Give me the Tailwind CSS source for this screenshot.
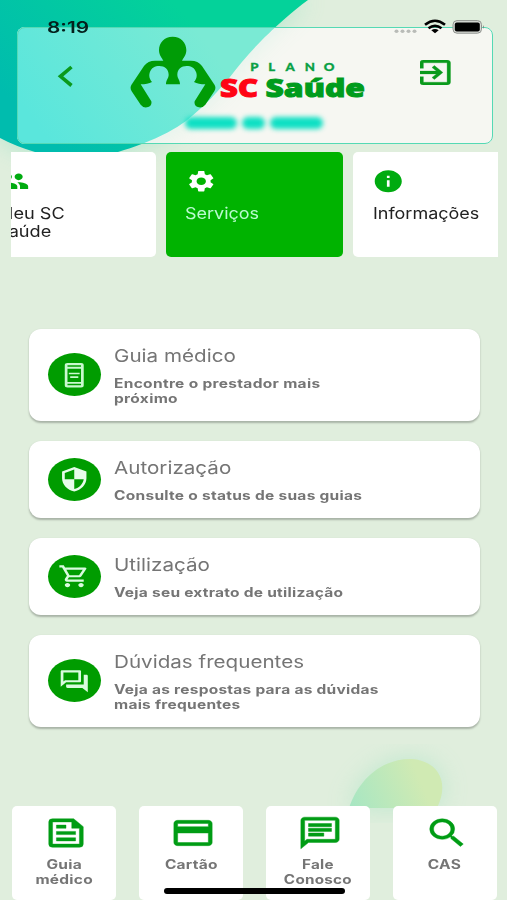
<!DOCTYPE html>
<html lang="pt-BR">
<head>
<meta charset="utf-8">
<meta name="viewport" content="width=device-width, initial-scale=1">
<title>SC Saúde</title>
<script src="https://cdn.jsdelivr.net/npm/@tailwindcss/browser@4"></script>
</head>
<body class="bg-[#e0eedd] font-['Inter','Liberation_Sans',sans-serif]">
<div class="relative isolate flex h-[900px] w-[507px] flex-col overflow-hidden">

  <!-- decorative background -->
  <svg class="absolute inset-0 -z-10" width="507" height="900" viewBox="0 0 507 900">
    <defs>
      <linearGradient id="sea" gradientUnits="userSpaceOnUse" x1="40" y1="130" x2="170" y2="0">
        <stop offset="0" stop-color="#00bcae"/><stop offset="1" stop-color="#04d29a"/>
      </linearGradient>
      <linearGradient id="seaLight" gradientUnits="userSpaceOnUse" x1="40" y1="130" x2="190" y2="20">
        <stop offset="0" stop-color="#5ae6dc"/><stop offset="1" stop-color="#7aead4"/>
      </linearGradient>
      <linearGradient id="leaf" gradientUnits="userSpaceOnUse" x1="350" y1="810" x2="420" y2="780">
        <stop offset="0" stop-color="#a6e6c3"/><stop offset="1" stop-color="#d0eab3"/>
      </linearGradient>
      <filter id="soft" x="-30%" y="-30%" width="160%" height="160%"><feGaussianBlur stdDeviation="13"/></filter>
      <clipPath id="panel"><rect x="17" y="27" width="476" height="117" rx="8"/></clipPath>
      <path id="wave" d="M0 0H308C293 11 275 27 262 40C250 52 240 64 230 77C220 89 205 106 186 121C172 131 152 142 118 152C95 158 60 160 35 152Q15 146 0 138Z"/>
    </defs>
    <use href="#wave" fill="#5fdcb4" opacity=".4" filter="url(#soft)"/>
    <use href="#wave" fill="url(#sea)"/>
    <g clip-path="url(#panel)">
      <rect x="17" y="27" width="476" height="117" fill="#f6f7f2"/>
      <use href="#wave" fill="#8fe8cc" opacity=".22" filter="url(#soft)"/>
      <use href="#wave" fill="url(#seaLight)"/>
    </g>
    <path d="M349 808C358 780 382 758 412 759C438 761 450 782 437 808Z" fill="#7fdcb0" opacity=".35" filter="url(#soft)"/>
    <path d="M349 808C358 780 382 758 412 759C438 761 450 782 437 808Z" fill="url(#leaf)"/>
  </svg>

  <!-- status bar -->
  <div class="absolute inset-x-0 top-[18px] z-10 flex h-[18px] items-center pl-[47px] pr-[22px]">
    <span class="origin-left scale-x-[1.300] text-[16px] font-semibold leading-[18px] text-[#04201c]">8:19</span>
    <svg class="ml-auto" width="92" height="18" viewBox="0 0 92 18">
      <g fill="#b9bcb8"><ellipse cx="3.500" cy="13.300" rx="2" ry="1.700"/><ellipse cx="9.500" cy="13.300" rx="2" ry="1.700"/><ellipse cx="15.500" cy="13.300" rx="2" ry="1.700"/><ellipse cx="21.500" cy="13.300" rx="2" ry="1.700"/></g>
      <g fill="none" stroke="#000" stroke-width="2.600"><path d="M32 6.800Q42 -1.300 52 6.800"/><path d="M35.500 10.300Q42 5.300 48.500 10.300"/></g>
      <path d="M38.300 12.200Q42 9.600 45.700 12.200L42 15.200Z"/>
      <rect x="60" y="2.600" width="28.500" height="12.600" rx="4" fill="#d9dcd7" stroke="#8f928e"/>
      <rect x="61.800" y="4.600" width="25" height="8.800" rx="2"/>
      <path d="M90 7Q91.800 9 90 11Z" fill="#6f726e"/>
    </svg>
  </div>

  <!-- header -->
  <header class="ml-[17px] mt-[27px] flex h-[117px] w-[476px] shrink-0 rounded-[8px] border border-[#55d9b4]">
    <svg class="ml-[38px] mt-[36px] shrink-0" width="20" height="24" viewBox="0 0 20 24"><path d="M15.500 3L4.500 12.300L15.500 21.500" fill="none" stroke="#0a9a1c" stroke-width="3.600"/></svg>
    <div class="ml-[54px] mt-[8px] w-[240px] shrink-0">
      <svg width="240" height="74" viewBox="130 36 240 74">
        <g transform="translate(120 30) scale(.3333)" fill="#009c06">
          <path d="M158 20C183 20 199 38 199 60C199 76 190 84 186 92H213Q234 92 246 108L284 165Q289 174 283 184L256 224Q248 234 237 232Q221 228 224 214L256 163Q235 163 222 156C229 147 232 140 229 128C224 113 213 108 200 108C184 108 172 118 172 134C172 145 180 149 180 163H138C138 149 146 145 146 134C146 118 134 108 118 108C105 108 94 113 89 128C86 140 89 147 96 156Q83 163 62 163L94 214Q97 228 81 232Q70 234 62 224L35 184Q29 174 34 165L72 108Q84 92 105 92H130C126 84 117 76 117 60C117 38 133 20 158 20Z"/>
        </g>
        <text transform="scale(1.2 1)" x="208.500 223.500 238 254 269.800" y="71" font-family="Lato" font-weight="900" font-size="11" fill="#0aa045" stroke="#0aa045" stroke-width=".3">PLANO</text>
        <text x="220" y="97" font-family="Open Sans" font-weight="800" font-size="25" textLength="38" lengthAdjust="spacingAndGlyphs" fill="#ff0414" stroke="#ff0414">SC</text>
        <text x="265.500" y="97" font-family="Open Sans" font-weight="800" font-size="25" textLength="99.500" lengthAdjust="spacingAndGlyphs" fill="#009c1c" stroke="#009c1c">Saúde</text>
      </svg>
      <div class="ml-[55px] mt-[7px] flex gap-[5px] blur-[2.500px]">
        <span class="h-[12px] w-[52px] rounded-full bg-[#0ee0c4]"></span>
        <span class="h-[12px] w-[23px] rounded-full bg-[#0ee0c4]"></span>
        <span class="h-[12px] w-[53px] rounded-full bg-[#0ee0c4]"></span>
      </div>
    </div>
    <svg class="ml-[50px] mt-[32px] shrink-0" width="30.500" height="25" viewBox="3 3 18 18" preserveAspectRatio="none"><path fill="#0a9a1c" stroke="#0a9a1c" stroke-width=".2" d="M10.090 15.590L11.500 17l5-5-5-5-1.410 1.410L12.670 11H3v2h9.670l-2.580 2.590zM19 3H5a2 2 0 0 0-2 2v4h2V5h14v14H5v-4H3v4a2 2 0 0 0 2 2h14c1.100 0 2-.9 2-2V5c0-1.100-.9-2-2-2z"/></svg>
  </header>

  <!-- tabs -->
  <nav class="ml-[10.500px] mt-[8px] flex h-[105px] w-[487.500px] shrink-0 gap-[10px] overflow-hidden text-[15.500px] leading-[18px] text-[#212121]">
    <div class="-ml-[32px] w-[177px] shrink-0 rounded-[5px] bg-white pl-[18.500px] pt-[16px]">
      <svg width="32.500" height="26.500" viewBox="0 0 24 24" preserveAspectRatio="none"><path fill="#00ab10" d="M16 11c1.660 0 2.990-1.340 2.990-3S17.660 5 16 5c-1.660 0-3 1.340-3 3s1.340 3 3 3zm-8 0c1.660 0 2.990-1.340 2.990-3S9.660 5 8 5C6.340 5 5 6.340 5 8s1.340 3 3 3zm0 2c-2.330 0-7 1.170-7 3.500V19h14v-2.500c0-2.330-4.670-3.500-7-3.500zm8 0c-.29 0-.62.02-.97.05 1.160.84 1.970 1.970 1.970 3.450V19h6v-2.500c0-2.330-4.670-3.500-7-3.500z"/></svg>
      <p class="mt-[10px] origin-left scale-x-[1.170] whitespace-nowrap">Meu SC<br>Saúde</p>
    </div>
    <div class="w-[177px] shrink-0 rounded-[5px] bg-[#00b300] pl-[19.500px] pt-[16px] text-[#b9fbd0]">
      <svg class="ml-[-0.500px]" width="32.500" height="26.500" viewBox="0 0 24 24" preserveAspectRatio="none"><path transform="translate(12 12) scale(.96) translate(-12 -12)" fill="#fff" d="M19.140 12.940c.04-.3.06-.61.06-.94 0-.32-.02-.64-.07-.94l2.030-1.580c.18-.14.23-.41.12-.61l-1.920-3.320c-.12-.22-.37-.29-.59-.22l-2.390.96c-.5-.38-1.030-.7-1.620-.94l-.36-2.540c-.04-.24-.24-.41-.48-.41h-3.840c-.24 0-.43.17-.47.41l-.36 2.540c-.59.24-1.130.57-1.620.94l-2.390-.96c-.22-.08-.47 0-.59.22L2.740 8.870c-.12.21-.08.47.12.61l2.030 1.580c-.05.3-.09.63-.09.94s.02.64.07.94l-2.030 1.580c-.18.14-.23.41-.12.61l1.920 3.320c.12.22.37.29.59.22l2.390-.96c.5.38 1.030.7 1.620.94l.36 2.540c.05.24.24.41.48.41h3.840c.24 0 .44-.17.47-.41l.36-2.540c.59-.24 1.130-.56 1.620-.94l2.390.96c.22.08.47 0 .59-.22l1.920-3.320c.12-.22.07-.47-.12-.61l-2.010-1.580zM12 15.600c-1.980 0-3.600-1.620-3.600-3.600s1.620-3.600 3.600-3.600 3.600 1.620 3.600 3.600-1.620 3.600-3.600 3.600z"/></svg>
      <p class="mt-[10px] origin-left scale-x-[1.160] whitespace-nowrap">Serviços</p>
    </div>
    <div class="w-[177px] shrink-0 rounded-[5px] bg-white pl-[20px] pt-[16px]">
      <svg class="ml-[-0.500px]" width="32.500" height="26.500" viewBox="0 0 24 24" preserveAspectRatio="none"><path fill="#00ab10" d="M12 2C6.480 2 2 6.480 2 12s4.480 10 10 10 10-4.480 10-10S17.520 2 12 2zm1 15h-2v-6h2v6zm0-8h-2V7h2v2z"/></svg>
      <p class="mt-[10px] origin-left scale-x-[1.160] whitespace-nowrap">Informações</p>
    </div>
  </nav>

  <!-- services -->
  <main class="ml-[29px] mt-[71.500px] flex w-[451px] shrink-0 flex-col gap-[19.500px] text-[#757575]">
    <section class="flex h-[92.500px] items-center rounded-[12px] bg-white pl-[19px] shadow-[0_1.500px_2px_#00000040]">
      <span class="flex h-[43px] w-[53px] shrink-0 items-center justify-center rounded-[50%] bg-[#009c00]">
        <svg width="32.500" height="26.500" viewBox="0 0 24 24" preserveAspectRatio="none"><path fill="#c9f9cf" fill-rule="evenodd" d="M7 1h10a2 2 0 0 1 2 2v18a2 2 0 0 1-2 2H7a2 2 0 0 1-2-2V3a2 2 0 0 1 2-2zM7 3v1.200h10V3zM7 6v12h10V6zM7 19.800V21h10v-1.200zM8 9.700h8v1.500H8zM9 12.900h6v1.500H9z"/></svg>
      </span>
      <div class="ml-[13px] mt-[1px] origin-left scale-x-[1.240] whitespace-nowrap">
        <h2 class="origin-left scale-x-[.95] text-[17.500px] leading-[22px]">Guia médico</h2>
        <p class="mt-[9px] text-[12.500px] font-bold leading-[15px] tracking-[0.250px]">Encontre o prestador mais<br>próximo</p>
      </div>
    </section>
    <section class="flex h-[77.500px] items-center rounded-[12px] bg-white pl-[19px] shadow-[0_1.500px_2px_#00000040]">
      <span class="flex h-[43px] w-[53px] shrink-0 items-center justify-center rounded-[50%] bg-[#009c00]">
        <svg width="32.500" height="26.500" viewBox="0 0 24 24" preserveAspectRatio="none"><path fill="#e6fde9" d="M12 1L3 5v6c0 5.550 3.840 10.740 9 12 5.160-1.260 9-6.450 9-12V5l-9-4zm0 10.990h7c-.53 4.120-3.280 7.790-7 8.940V12H5V6.300l7-3.110v8.800z"/></svg>
      </span>
      <div class="ml-[13px] mt-[1px] origin-left scale-x-[1.240] whitespace-nowrap">
        <h2 class="origin-left scale-x-[.95] text-[17.500px] leading-[22px]">Autorização</h2>
        <p class="mt-[9px] text-[12.500px] font-bold leading-[15px] tracking-[0.220px]">Consulte o status de suas guias</p>
      </div>
    </section>
    <section class="flex h-[77.500px] items-center rounded-[12px] bg-white pl-[19px] shadow-[0_1.500px_2px_#00000040]">
      <span class="flex h-[43px] w-[53px] shrink-0 items-center justify-center rounded-[50%] bg-[#009c00]">
        <svg width="32.500" height="26.500" viewBox="0 0 24 24" preserveAspectRatio="none"><path fill="#d9fbde" d="M15.550 13c.75 0 1.410-.41 1.750-1.030l3.580-6.490c.37-.66-.11-1.480-.87-1.480H5.210l-.94-2H1v2h2l3.600 7.590-1.350 2.440C4.520 15.370 5.480 17 7 17h12v-2H7l1.100-2h7.450zM6.160 6h12.150l-2.760 5H8.530L6.160 6zM7 18c-1.100 0-1.990.9-1.990 2S5.900 22 7 22s2-.9 2-2-.9-2-2-2zm10 0c-1.100 0-1.990.9-1.990 2s.89 2 1.990 2 2-.9 2-2-.9-2-2-2z"/></svg>
      </span>
      <div class="ml-[13px] mt-[1px] origin-left scale-x-[1.240] whitespace-nowrap">
        <h2 class="origin-left scale-x-[.95] text-[17.500px] leading-[22px]">Utilização</h2>
        <p class="mt-[9px] text-[12.500px] font-bold leading-[15px] tracking-[0.200px]">Veja seu extrato de utilização</p>
      </div>
    </section>
    <section class="flex h-[92.500px] items-center rounded-[12px] bg-white pl-[19px] shadow-[0_1.500px_2px_#00000040]">
      <span class="flex h-[43px] w-[53px] shrink-0 items-center justify-center rounded-[50%] bg-[#009c00]">
        <svg width="32.500" height="26.500" viewBox="0 0 24 24" preserveAspectRatio="none"><path fill="#d9fbde" d="M15 4v7H5.170L4 12.170V4h11m1-2H3c-.55 0-1 .45-1 1v14l4-4h10c.55 0 1-.45 1-1V3c0-.55-.45-1-1-1zm5 4h-2v9H6v2c0 .55.45 1 1 1h11l4 4V7c0-.55-.45-1-1-1z"/></svg>
      </span>
      <div class="ml-[13px] mt-[1px] origin-left scale-x-[1.240] whitespace-nowrap">
        <h2 class="origin-left scale-x-[.95] text-[17.500px] leading-[22px]">Dúvidas frequentes</h2>
        <p class="mt-[9px] text-[12.500px] font-bold leading-[15px] tracking-[0.200px]">Veja as respostas para as dúvidas<br>mais frequentes</p>
      </div>
    </section>
  </main>

  <!-- bottom shortcuts -->
  <footer class="ml-[12px] mt-auto grid h-[94px] w-[485px] shrink-0 grid-cols-4 gap-[22.500px] text-center text-[12.500px] font-bold leading-[15px] tracking-[0.200px] text-[#757575]">
    <div class="flex flex-col items-center rounded-[5px] bg-white pt-[8px]">
      <svg class="ml-[4px]" width="46" height="38" viewBox="0 0 24 24" preserveAspectRatio="none"><path fill="#009c14" stroke="#009c14" stroke-width=".25" d="M16 3H5a2 2 0 0 0-2 2v14a2 2 0 0 0 2 2h14a2 2 0 0 0 2-2V8l-5-5zm3 16H5V5h10v4h4v10zM7 17h10v-2H7v2zm5-10H7v2h5V7zm-5 6h10v-2H7v2z"/></svg>
      <p class="mt-[5px] scale-x-[1.240]">Guia<br>médico</p>
    </div>
    <div class="flex flex-col items-center rounded-[5px] bg-white pt-[8px]">
      <svg class="ml-[4px]" width="46" height="38" viewBox="0 0 24 24" preserveAspectRatio="none"><path fill="#009c14" stroke="#009c14" stroke-width=".25" d="M20 4H4c-1.110 0-1.990.89-1.990 2L2 18c0 1.110.89 2 2 2h16c1.110 0 2-.89 2-2V6c0-1.110-.89-2-2-2zm0 14H4v-6h16v6zm0-10H4V6h16v2z"/></svg>
      <p class="mt-[5px] scale-x-[1.240]">Cartão</p>
    </div>
    <div class="flex flex-col items-center rounded-[5px] bg-white pt-[8px]">
      <svg class="ml-[4px]" width="46" height="38" viewBox="0 0 24 24" preserveAspectRatio="none"><path fill="#009c14" stroke="#009c14" stroke-width=".25" d="M4 4h16v12H5.170L4 17.170V4m0-2c-1.100 0-1.990.9-1.990 2L2 22l4-4h14c1.100 0 2-.9 2-2V4c0-1.100-.9-2-2-2H4zm2 10h8v2H6v-2zm0-3h12v2H6V9zm0-3h12v2H6V6z"/></svg>
      <p class="mt-[5px] scale-x-[1.220]">Fale<br>Conosco</p>
    </div>
    <div class="flex flex-col items-center rounded-[5px] bg-white pt-[8px]">
      <svg class="ml-[4px]" width="46" height="38" viewBox="0 0 24 24" preserveAspectRatio="none"><path fill="#009c14" stroke="#009c14" stroke-width=".25" d="M15.500 14h-.79l-.28-.27A6.471 6.471 0 0 0 16 9.500 6.500 6.500 0 1 0 9.500 16c1.610 0 3.090-.59 4.230-1.570l.27.28v.79l5 4.990L20.490 19l-4.990-5zm-6 0C7.010 14 5 11.990 5 9.500S7.010 5 9.500 5 14 7.010 14 9.500 11.990 14 9.500 14z"/></svg>
      <p class="mt-[5px] scale-x-[1.240]">CAS</p>
    </div>
  </footer>
  <div class="absolute bottom-[6.500px] left-[164px] h-[5.500px] w-[181px] rounded-full bg-black"></div>
</div>
</body>
</html>
